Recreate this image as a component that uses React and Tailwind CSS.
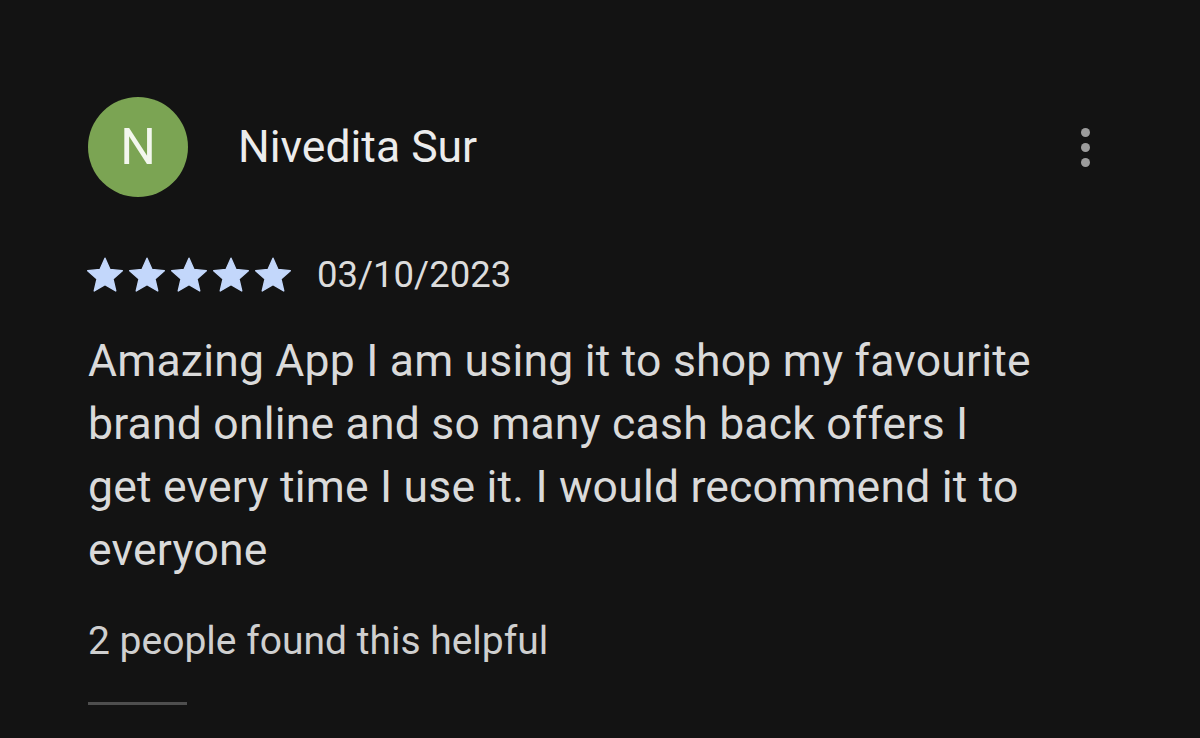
import React from "react";

function Star() {
  return (
    <svg viewBox="0 0 24 24" className="w-[42px] h-[42px]" fill="#c3d7fb">
      <path
        d="M12 2.4l2.85 6.45 7.05.65-5.35 4.7 1.6 6.9L12 17.5l-6.15 3.6 1.6-6.9L2.1 9.5l7.05-.65z"
        stroke="#c3d7fb"
        strokeWidth="0.8"
        strokeLinejoin="round"
      />
    </svg>
  );
}

export default function App() {
  return (
    <div
      className="w-[1200px] h-[738px] bg-[#131313] overflow-hidden pl-[88px] pr-[110px] pt-[97px]"
      style={{ fontFamily: "Roboto, 'Open Sans', sans-serif" }}
    >
      {/* Header */}
      <div className="flex items-center">
        <div className="w-[100px] h-[100px] rounded-full bg-[#7ba453] flex items-center justify-center text-[#f3f7ee] text-[50px] leading-none">
          N
        </div>
        <div className="ml-[50px] text-[#ececec] text-[44.5px] leading-none">Nivedita Sur</div>
        <div className="ml-auto flex flex-col gap-[6px] items-center">
          <span className="w-[9px] h-[9px] rounded-full bg-[#9c9c9c]" />
          <span className="w-[9px] h-[9px] rounded-full bg-[#9c9c9c]" />
          <span className="w-[9px] h-[9px] rounded-full bg-[#9c9c9c]" />
        </div>
      </div>

      {/* Rating */}
      <div className="flex items-center mt-[57px]">
        <div className="flex -ml-[4px]">
          <Star />
          <Star />
          <Star />
          <Star />
          <Star />
        </div>
        <span className="ml-[23px] text-[#dcdcdc] text-[36.5px] leading-none">03/10/2023</span>
      </div>

      {/* Body */}
      <p className="mt-[34px] text-[#dadada] text-[44.5px] tracking-[0.2px] leading-[63px] whitespace-nowrap">
        Amazing App I am using it to shop my favourite
        <br />
        brand online and so many cash back offers I
        <br />
        get every time I use it. I would recommend it to
        <br />
        everyone
      </p>

      <div className="mt-[40px] text-[#cfcfcf] text-[39px] leading-none">2 people found this helpful</div>

      <div className="mt-[41px] w-[99px] h-[3px] bg-[#4e4e4e]" />
    </div>
  );
}
